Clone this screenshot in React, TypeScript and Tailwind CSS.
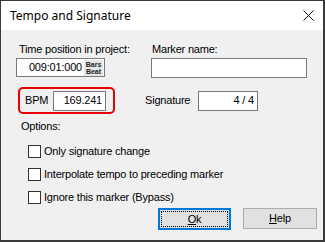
import React from "react";

const ui = { fontFamily: '"Liberation Sans", Arial, sans-serif' };

function CheckRow({ label }: { label: string }) {
  return (
    <div className="flex items-center h-[13px] ml-[27px]">
      <div className="w-[13px] h-[13px] border border-[#333333] bg-white shrink-0" />
      <span className="ml-[3px] text-[11px] leading-[13px] text-black">{label}</span>
    </div>
  );
}

export default function App() {
  return (
    <div
      className="w-[325px] h-[242px] flex flex-col border-t border-l border-r-2 border-b-2 border-[#3a3a3a] bg-[#f0f0f0] overflow-hidden"
      style={ui}
    >
      {/* title bar */}
      <div className="h-[29px] bg-white flex items-center shrink-0">
        <span
          className="ml-[9px] text-[12px] text-black"
          style={{ fontFamily: '"Noto Sans", "Open Sans", sans-serif' }}
        >
          Tempo and Signature
        </span>
        <svg className="ml-auto mr-[9px]" width="11" height="11" viewBox="0 0 11 11">
          <path d="M0.5 0.5 L10.5 10.5 M10.5 0.5 L0.5 10.5" stroke="#111" strokeWidth="1" />
        </svg>
      </div>

      {/* body */}
      <div className="flex flex-col flex-1 text-[11px] leading-[13px] tracking-[-0.2px] text-black">
        <div className="flex mt-[13px]">
          <div className="ml-[15px] w-[135px] flex flex-col">
            <span className="pl-[3px]">Time position in project:</span>
            <div className="mt-[2px] w-[89px] h-[19px] border border-[#7a7a7a] bg-white flex items-center justify-end">
              <span className="mr-[2px] text-[11px]">009:01:000</span>
              <div className="w-[19px] h-[16px] bg-[#e6e6e6] mr-[1px] flex flex-col items-center justify-center leading-[7px] text-[7px] tracking-normal font-bold text-[#222]">
                <span>Bars</span>
                <span>Beat</span>
              </div>
            </div>
          </div>
          <div className="flex flex-col">
            <span className="pl-[1px]">Marker name:</span>
            <div className="mt-[2px] w-[156px] h-[20px] border border-[#7a7a7a] bg-white" />
          </div>
        </div>

        <div className="flex items-center mt-[9px]">
          <div className="ml-[17px] w-[97px] h-[27px] border-2 border-[#e80000] rounded-[5px] flex items-center">
            <span className="ml-[5px]">BPM</span>
            <div className="ml-auto mr-[7px] w-[53px] h-[20px] border border-[#7a7a7a] bg-white flex items-center justify-end pr-[3px]">
              169.241
            </div>
          </div>
          <span className="ml-[30px] w-[53px]">Signature</span>
          <div className="w-[60px] h-[20px] border border-[#7a7a7a] bg-white flex items-center justify-end pr-[3px]">
            4 / 4
          </div>
        </div>

        <span className="ml-[20px] mt-[6px]">Options:</span>

        <div className="flex flex-col gap-[10px] mt-[12px]">
          <CheckRow label="Only signature change" />
          <CheckRow label="Interpolate tempo to preceding marker" />
          <CheckRow label="Ignore this marker (Bypass)" />
        </div>

        <div className="flex justify-end gap-[12px] mt-[4px] mr-[6px]">
          <button className="w-[73px] h-[22px] border-2 border-[#0078d7] bg-[#e1e1e1] outline-dotted outline-1 outline-black outline-offset-[-4px] text-[11px]">
            <span className="underline underline-offset-1">O</span>k
          </button>
          <button className="w-[74px] h-[21px] border border-[#adadad] bg-[#e1e1e1] text-[11px]">
            <span className="underline underline-offset-1">H</span>elp
          </button>
        </div>
      </div>
    </div>
  );
}
